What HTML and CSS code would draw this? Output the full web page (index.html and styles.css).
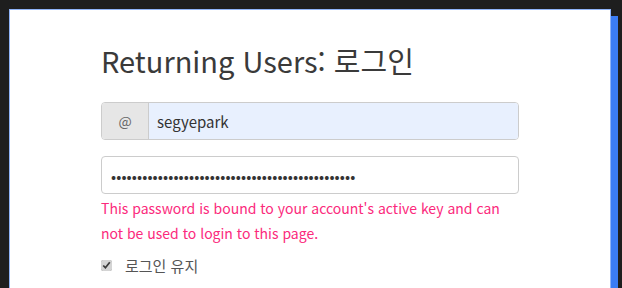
FILE: index.html
```html
<!DOCTYPE html>
<html lang="ko">
<head>
  <meta charset="UTF-8" />
  <meta name="viewport" content="width=device-width, initial-scale=1.0"/>
  <title>Login</title>
  <link rel="stylesheet" href="styles.css">
</head>
<body>

  <div class="modal">
    <div class="login">
      <h2 class="login-title">Returning Users: 로그인</h2>

      <div class="input-group">
        <span class="addon">@</span>
        <input class="field field-filled" type="text" value="segyepark">
      </div>

      <input class="field field-pass" type="password" value="ppppppppppppppppppppppppppppppppppppppppppppppp">
      <div class="error">This password is bound to your account's active key and can not be used to login to this page.</div>

      <label class="keep">
        <input type="checkbox" checked>
        <span>로그인 유지</span>
      </label>
    </div>
  </div>

</body>
</html>
```

FILE: styles.css
```css
:root {
  --bg: #1e1e1e;
  --border: #cccccc;
  --text: #333333;
  --error: #fb2a7c;
  --accent: #3b7cf4;
}

* {
  box-sizing: border-box;
}

body {
  margin: 0;
  background: var(--bg);
  font-family: "Noto Sans CJK KR", "Noto Sans", sans-serif;
  color: var(--text);
  overflow: hidden;
}

.modal {
  margin: 9px 0 0 9px;
  width: 602px;
  height: 400px;
  background: #fff;
  border: 1px solid #8fb3f7;
  box-shadow: 7px 7px 0 var(--accent);
}

.login {
  width: 418px;
  margin: 0 auto;
  padding-top: 30px;
}

.login-title {
  margin: 0 0 22px;
  font-size: 29px;
  font-weight: 400;
  line-height: 40px;
  color: #3a3a3a;
}

.input-group {
  display: flex;
  height: 38px;
  border: 1px solid var(--border);
  border-radius: 4px;
  overflow: hidden;
  margin-bottom: 16px;
}

.addon {
  width: 47px;
  display: flex;
  align-items: center;
  justify-content: center;
  background: #e6e6e6;
  border-right: 1px solid var(--border);
  color: #666;
  font-size: 14px;
}

.field {
  display: block;
  width: 100%;
  height: 38px;
  font-family: inherit;
  font-size: 15px;
  color: var(--text);
  padding: 0 8px;
  outline: none;
}

.field-filled {
  flex: 1;
  height: 100%;
  border: none;
  background: #e8f0fe;
}

.field-pass {
  border: 1px solid var(--border);
  border-radius: 4px;
  background: #fff;
  padding: 0 9px;
  letter-spacing: 0.1px;
}

.error {
  color: var(--error);
  font-size: 14px;
  line-height: 25px;
  margin-top: 2px;
}

.keep {
  display: flex;
  align-items: center;
  gap: 13px;
  margin-top: 9px;
  font-size: 15px;
  color: #555;
}

.keep input {
  margin: 0;
  width: 11px;
  height: 11px;
  accent-color: #d4d4d4;
}
```
